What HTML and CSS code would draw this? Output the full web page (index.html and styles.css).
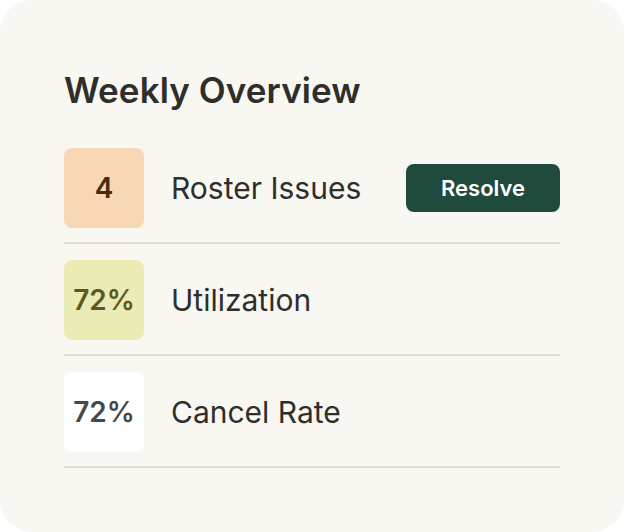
FILE: index.html
```html
<!DOCTYPE html>
<html lang="en">
<head>
<meta charset="utf-8">
<title>Weekly Overview</title>
<link rel="stylesheet" href="styles.css">
</head>
<body>
<div class="card">
  <h1 class="title">Weekly Overview</h1>
  <ul class="list">
    <li class="row">
      <div class="badge badge-orange">4</div>
      <span class="label">Roster Issues</span>
      <button class="btn" type="button">Resolve</button>
    </li>
    <li class="row">
      <div class="badge badge-lime">72%</div>
      <span class="label">Utilization</span>
    </li>
    <li class="row">
      <div class="badge badge-white">72%</div>
      <span class="label">Cancel Rate</span>
    </li>
  </ul>
</div>
</body>
</html>
```

FILE: styles.css
```css
* { box-sizing: border-box; }
html, body { margin: 0; padding: 0; background: #ffffff; }
body {
  font-family: Inter, "Noto Sans", "Liberation Sans", sans-serif;
  color: #2f2e2a;
}
.card {
  width: 624px;
  height: 532px;
  background: #f8f7f2;
  border-radius: 32px;
  padding: 64px 64px 0 64px;
}
.title {
  margin: 0;
  font-size: 35px;
  font-weight: 600;
  line-height: 52px;
  letter-spacing: 0.1px;
  color: #2f2e2a;
}
.list {
  list-style: none;
  margin: 0;
  padding: 32px 0 0 0;
}
.row {
  display: flex;
  align-items: center;
  gap: 27px;
  padding: 16px 0 14px 0;
  border-bottom: 2px solid #dfdfd8;
}
.row:first-child { padding-top: 0; }
.badge {
  width: 80px;
  height: 80px;
  flex: none;
  border-radius: 8px;
  display: flex;
  align-items: center;
  justify-content: center;
  font-size: 28px;
  font-weight: 600;
}
.badge-orange { background: #f8d8b4; color: #4a2a10; }
.badge-lime { background: #ebecb5; color: #5b5922; }
.badge-white { background: #ffffff; color: #45494a; }
.label {
  flex: 1;
  font-size: 30px;
  font-weight: 400;
  color: #2f2e2a;
}
.btn {
  flex: none;
  width: 154px;
  height: 48px;
  border: none;
  border-radius: 8px;
  background: #1f4a3c;
  color: #ffffff;
  font-family: inherit;
  font-size: 22px;
  font-weight: 600;
  padding: 0;
}
```
